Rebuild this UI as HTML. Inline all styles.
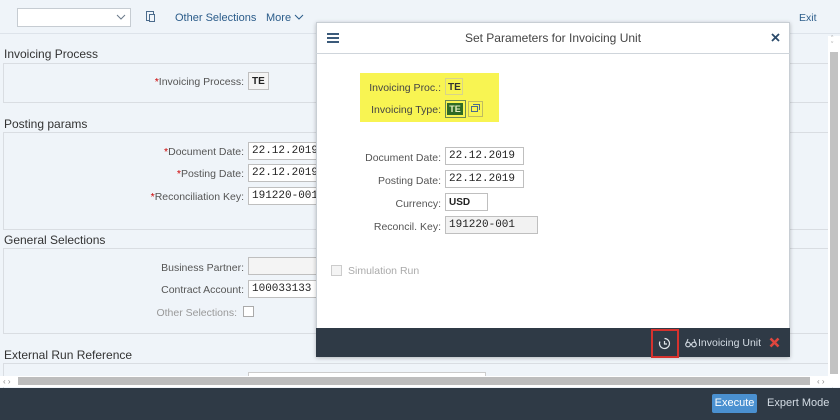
<!DOCTYPE html>
<html><head><meta charset="utf-8"><style>
*{box-sizing:border-box;margin:0;padding:0}
body{width:840px;height:420px;overflow:hidden;background:#eff4f9;font-family:"Liberation Sans",sans-serif;font-size:11px;color:#333;position:relative}
.a{position:absolute}
.lbl{position:absolute;text-align:right;color:#555;font-size:10.5px}
.req{color:#c00}
.inp{position:absolute;background:#fff;border:1px solid #bfbfbf;font-family:"Liberation Mono",monospace;font-size:11px;padding:2px 3px;color:#222;height:18px;line-height:13px}
.sec{position:absolute;left:3px;width:830px;border:1px solid #d9dde2;background:#eff4f9}
.ttl{position:absolute;left:4px;font-size:12px;color:#333}
</style></head><body>
<div class="a" style="left:0;top:0;width:840px;height:34px;border-bottom:1px solid #dde3ea"></div>
<div class="a" style="left:17px;top:8px;width:114px;height:19px;background:#fff;border:1px solid #c6ccd2"></div>
<svg class="a" style="left:116px;top:14px" width="10" height="6" viewBox="0 0 10 6"><path d="M1 1l4 4 4-4" fill="none" stroke="#6a7a8a" stroke-width="1"/></svg>
<div class="a" style="left:146px;top:11px;width:8px;height:10px;border:1.5px solid #4b6b8c"></div>
<div class="a" style="left:149px;top:14px;width:6px;height:8px;border:1px solid #4b6b8c;background:#eff4f9"></div>
<div class="a" style="left:175px;top:12px;color:#2b5c8a;font-size:11px">Other Selections</div>
<div class="a" style="left:266px;top:12px;color:#2b5c8a;font-size:11px">More</div>
<svg class="a" style="left:294px;top:14px" width="10" height="6" viewBox="0 0 10 6"><path d="M1 1l4 4 4-4" fill="none" stroke="#2b5c8a" stroke-width="1"/></svg>
<div class="a" style="left:799px;top:12px;color:#2b5c8a;font-size:10.5px">Exit</div>

<div class="ttl" style="top:47px">Invoicing Process</div>
<div class="sec" style="top:63px;height:40px"></div>
<div class="lbl" style="left:100px;width:144px;top:76px"><span class="req">*</span>Invoicing Process:</div>
<div class="inp" style="left:248px;top:72px;width:21px;background:#f4f4f4;font-family:'Liberation Sans';font-weight:bold;font-size:10px">TE</div>

<div class="ttl" style="top:117px">Posting params</div>
<div class="sec" style="top:132px;height:98px"></div>
<div class="lbl" style="left:100px;width:144px;top:146px"><span class="req">*</span>Document Date:</div>
<div class="inp" style="left:248px;top:142px;width:80px">22.12.2019</div>
<div class="lbl" style="left:100px;width:144px;top:168px"><span class="req">*</span>Posting Date:</div>
<div class="inp" style="left:248px;top:164px;width:80px">22.12.2019</div>
<div class="lbl" style="left:100px;width:144px;top:191px"><span class="req">*</span>Reconciliation Key:</div>
<div class="inp" style="left:248px;top:187px;width:80px">191220-001</div>

<div class="ttl" style="top:233px">General Selections</div>
<div class="sec" style="top:248px;height:86px"></div>
<div class="lbl" style="left:100px;width:144px;top:262px">Business Partner:</div>
<div class="inp" style="left:248px;top:257px;width:80px;background:#f4f4f4"></div>
<div class="lbl" style="left:100px;width:144px;top:284px">Contract Account:</div>
<div class="inp" style="left:248px;top:280px;width:80px">100033133</div>
<div class="lbl" style="left:100px;width:137px;top:307px;color:#999">Other Selections:</div>
<div class="a" style="left:243px;top:306px;width:11px;height:11px;border:1px solid #aaa;background:#fff"></div>

<div class="ttl" style="top:348px">External Run Reference</div>
<div class="sec" style="top:363px;height:30px;border-bottom:none"></div>
<div class="a" style="left:248px;top:372px;width:238px;height:8px;background:#fff;border:1px solid #ccc"></div>

<div class="a" style="left:0;top:376px;width:840px;height:11px;background:#fff"></div>
<div class="a" style="left:3px;top:377px;font-size:8px;color:#888">&lsaquo; &rsaquo;</div>
<div class="a" style="left:18px;top:377px;width:792px;height:8px;background:#bdbdbd"></div>
<div class="a" style="left:817px;top:377px;font-size:8px;color:#888">&lsaquo; &rsaquo;</div>
<div class="a" style="left:828px;top:36px;width:12px;height:340px;background:#fff"></div>
<div class="a" style="left:831px;top:37px;font-size:7px;color:#888;line-height:6px">&#710;<br>&#711;</div>
<div class="a" style="left:830px;top:52px;width:8px;height:322px;background:#c2c2c2"></div>

<div class="a" style="left:0;top:388px;width:840px;height:32px;background:#2f3a46"></div>
<div class="a" style="left:712px;top:394px;width:45px;height:19px;background:#4a90d0;color:#fff;font-size:11px;text-align:center;line-height:19px;border-radius:2px">Execute</div>
<div class="a" style="left:767px;top:397px;color:#d5dde5;font-size:11px">Expert Mode</div>

<div class="a" style="left:316px;top:22px;width:474px;height:335px;background:#fff;border:1px solid #c8ced4;box-shadow:0 1px 4px rgba(0,0,0,.25)"></div>
<div class="a" style="left:316px;top:22px;width:474px;height:32px;border-bottom:1px solid #cfd5db"></div>
<div class="a" style="left:327px;top:33px;width:12px;height:2px;background:#3b5a7a;box-shadow:0 4px 0 #3b5a7a,0 8px 0 #3b5a7a"></div>
<div class="a" style="left:316px;top:31px;width:474px;text-align:center;font-size:12px;color:#444">Set Parameters for Invoicing Unit</div>
<svg class="a" style="left:771px;top:33px" width="9" height="9" viewBox="0 0 9 9"><path d="M1 1l7 7M8 1l-7 7" stroke="#2b4a6a" stroke-width="1.8"/></svg>

<div class="a" style="left:360px;top:73px;width:139px;height:49px;background:#f8f452"></div>
<div class="lbl" style="left:340px;width:101px;top:82px;color:#444">Invoicing Proc.:</div>
<div class="a" style="left:445px;top:78px;width:18px;height:17px;border:1px solid #d8d48a;font-weight:bold;font-size:10px;padding:3px 2px">TE</div>
<div class="lbl" style="left:340px;width:101px;top:104px;color:#444">Invoicing Type:</div>
<div class="a" style="left:445px;top:100px;width:21px;height:18px;border:1px solid #6d8a50"></div>
<div class="a" style="left:447px;top:103px;width:16px;height:12px;background:#2e6b25;color:#e8f0c0;font-size:9px;font-weight:bold;text-align:center;line-height:12px">TE</div>
<div class="a" style="left:468px;top:101px;width:15px;height:16px;border:1px solid #c0bc60"></div>
<div class="a" style="left:471px;top:106px;width:7px;height:6px;border:1px solid #4b6b8c"></div>
<div class="a" style="left:473px;top:104px;width:7px;height:6px;border-top:1px solid #4b6b8c;border-right:1px solid #4b6b8c"></div>

<div class="lbl" style="left:340px;width:101px;top:152px">Document Date:</div>
<div class="inp" style="left:445px;top:147px;width:79px">22.12.2019</div>
<div class="lbl" style="left:340px;width:101px;top:175px">Posting Date:</div>
<div class="inp" style="left:445px;top:170px;width:79px">22.12.2019</div>
<div class="lbl" style="left:340px;width:101px;top:198px">Currency:</div>
<div class="inp" style="left:445px;top:193px;width:43px;font-family:'Liberation Sans';font-weight:bold;font-size:10px">USD</div>
<div class="lbl" style="left:340px;width:101px;top:221px">Reconcil. Key:</div>
<div class="inp" style="left:445px;top:216px;width:93px;background:#f2f2f2">191220-001</div>
<div class="a" style="left:331px;top:265px;width:11px;height:11px;border:1px solid #ccc;background:#f4f4f4"></div>
<div class="a" style="left:348px;top:265px;color:#aaa;font-size:10.5px">Simulation Run</div>

<div class="a" style="left:316px;top:328px;width:474px;height:29px;background:#2f3a46"></div>
<div class="a" style="left:651px;top:329px;width:28px;height:29px;border:2px solid #d6322e"></div>
<svg class="a" style="left:658px;top:337px" width="13" height="13" viewBox="0 0 13 13"><path d="M6.5 1.5a5 5 0 1 1-4.6 3" fill="none" stroke="#dfe5ea" stroke-width="1.2"/><path d="M6.5 4v3h2.5" fill="none" stroke="#dfe5ea" stroke-width="1.2"/></svg>
<svg class="a" style="left:685px;top:338px" width="12" height="10" viewBox="0 0 12 10"><circle cx="3" cy="6.5" r="2.3" fill="none" stroke="#d5dde5" stroke-width="1.1"/><circle cx="9" cy="6.5" r="2.3" fill="none" stroke="#d5dde5" stroke-width="1.1"/><path d="M1 6L3 1M11 6L9 1M5.3 6.5h1.4" fill="none" stroke="#d5dde5" stroke-width="1"/></svg>
<div class="a" style="left:698px;top:337px;color:#d5dde5;font-size:10.5px">Invoicing Unit</div>
<svg class="a" style="left:769px;top:337px" width="11" height="11" viewBox="0 0 11 11"><path d="M1.5 1.5l8 8M9.5 1.5l-8 8" stroke="#e0463e" stroke-width="2.6"/></svg>
</body></html>
